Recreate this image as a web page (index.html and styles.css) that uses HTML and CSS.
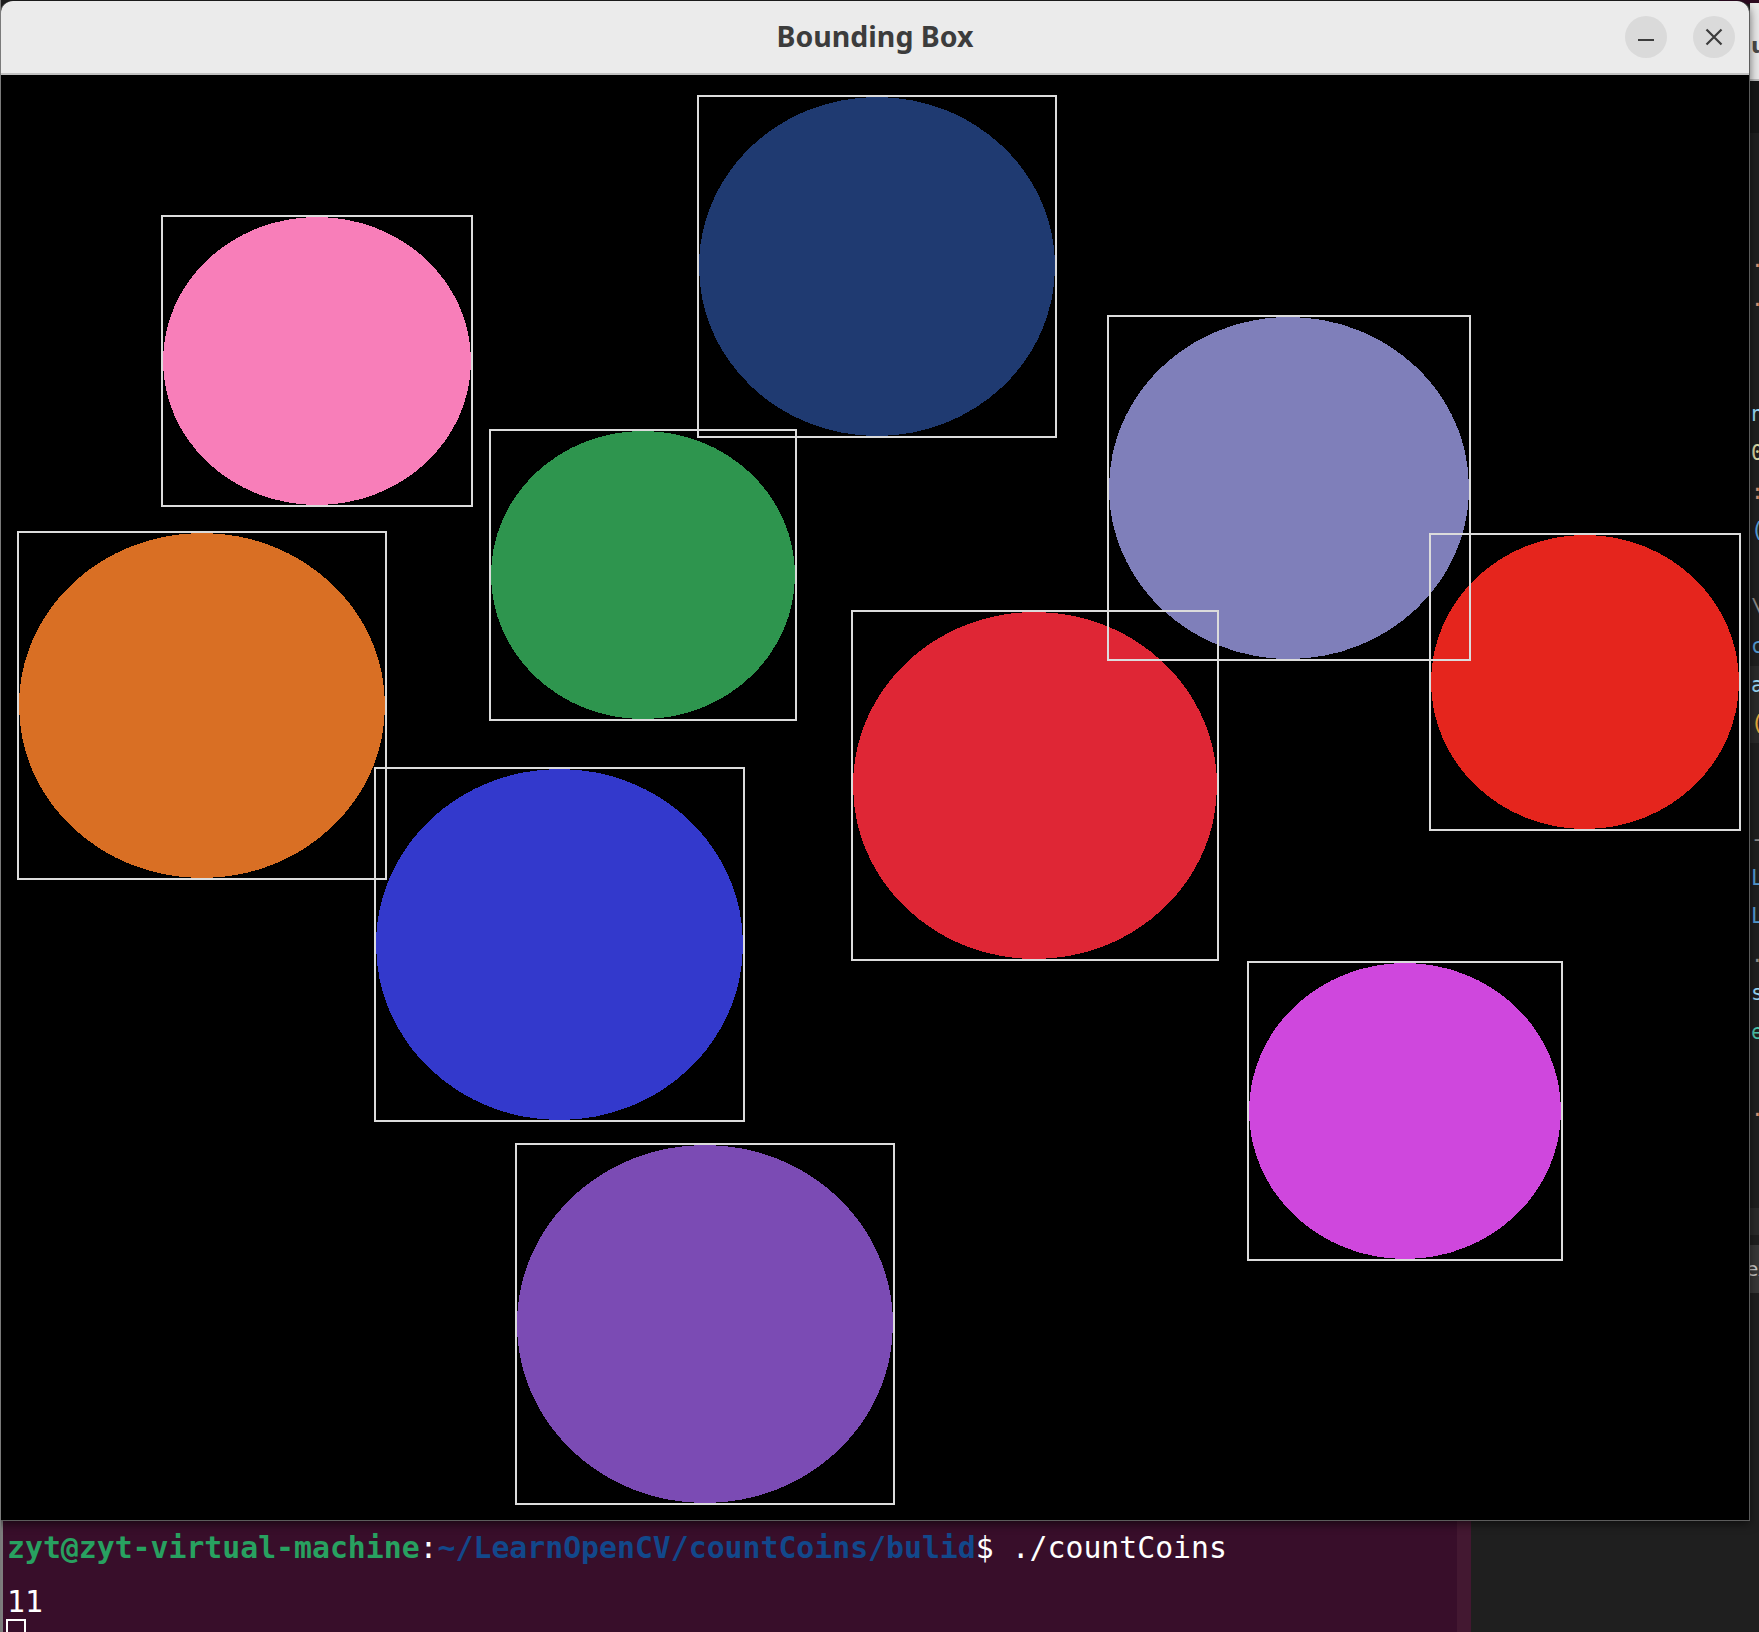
FILE: index.html
```html
<!DOCTYPE html>
<html>
<head>
<meta charset="utf-8">
<link rel="stylesheet" href="styles.css">
</head>
<body>
<div class="desktop">
  <div class="corner"></div>
  <div class="editor">
    <div class="ed-top"><span class="ed-title">u</span></div>
    <div class="ed-dark"></div>
    <div class="ed-code">
      <div class="ln c-or">.</div>
      <div class="ln c-or">.</div>
      <div class="ln"></div>
      <div class="ln"></div>
      <div class="ln c-lb">n</div>
      <div class="ln c-ye">0</div>
      <div class="ln c-or">:</div>
      <div class="ln c-bl">(</div>
      <div class="ln"></div>
      <div class="ln c-gr">\</div>
      <div class="ln c-bl">c</div>
      <div class="ln c-lb hl">a</div>
      <div class="ln c-go hl">(</div>
      <div class="ln"></div>
      <div class="ln"></div>
      <div class="ln c-gr">-</div>
      <div class="ln c-bl">L</div>
      <div class="ln c-bl">L</div>
      <div class="ln c-gr">.</div>
      <div class="ln c-lb">s</div>
      <div class="ln c-te">e</div>
      <div class="ln"></div>
      <div class="ln c-or">.</div>
    </div>
    <div class="ed-band1"></div>
    <div class="ed-band2"><span>ex</span></div>
  </div>

  <div class="term">
    <div class="tline"><span class="t-green">zyt@zyt-virtual-machine</span><span class="t-white">:</span><span class="t-blue">~/LearnOpenCV/countCoins/bulid</span><span class="t-white">$ ./countCoins</span></div>
    <div class="tline"><span class="t-white">11</span></div>
    <div class="tline cur-line"><span class="cursor"></span></div>
  </div>

  <div class="win">
    <div class="titlebar">
      <div class="tb-side"></div>
      <div class="title">Bounding Box</div>
      <div class="tb-btns">
        <div class="wbtn">
          <svg width="18" height="18" viewBox="0 0 18 18"><rect x="1" y="11" width="16" height="2" fill="#3c3c3c"/></svg>
        </div>
        <div class="wbtn">
          <svg width="18" height="18" viewBox="0 0 18 18"><path d="M1.5 1.5 L16.5 16.5 M16.5 1.5 L1.5 16.5" stroke="#3c3c3c" stroke-width="2.2" fill="none"/></svg>
        </div>
      </div>
    </div>
    <svg class="canvas" width="1747" height="1445" viewBox="1 75 1747 1445">
      <g class="coins">
        <ellipse cx="877" cy="266.5" rx="178" ry="169.5" fill="#1f3a71"/>
        <ellipse cx="317" cy="361" rx="154" ry="144" fill="#f87eb9"/>
        <ellipse cx="1289" cy="488" rx="180" ry="171" fill="#7f7fba"/>
        <ellipse cx="643" cy="575" rx="152" ry="144" fill="#2e954e"/>
        <ellipse cx="202" cy="705.5" rx="183" ry="172.5" fill="#d96f24"/>
        <ellipse cx="1585" cy="682" rx="154" ry="147" fill="#e5251d"/>
        <ellipse cx="1035" cy="785.5" rx="182" ry="173.5" fill="#df2635"/>
        <ellipse cx="559.5" cy="944.5" rx="183.5" ry="175.5" fill="#3339cc"/>
        <ellipse cx="1405" cy="1111" rx="156" ry="148" fill="#cf47dd"/>
        <ellipse cx="705" cy="1324" rx="188" ry="179" fill="#7b4bb4"/>
      </g>
      <g class="boxes">
        <rect x="698" y="96" width="358" height="341"/>
        <rect x="162" y="216" width="310" height="290"/>
        <rect x="1108" y="316" width="362" height="344"/>
        <rect x="490" y="430" width="306" height="290"/>
        <rect x="18" y="532" width="368" height="347"/>
        <rect x="1430" y="534" width="310" height="296"/>
        <rect x="852" y="611" width="366" height="349"/>
        <rect x="375" y="768" width="369" height="353"/>
        <rect x="1248" y="962" width="314" height="298"/>
        <rect x="516" y="1144" width="378" height="360"/>
      </g>
    </svg>
  </div>
</div>
</body>
</html>
```

FILE: styles.css
```css
html, body {
  margin: 0;
  padding: 0;
  background: #1f1f1f;
}

body {
  width: 1759px;
  height: 1632px;
  overflow: hidden;
}

.desktop {
  position: relative;
  width: 1759px;
  height: 1632px;
  overflow: hidden;
  background: #1f1f1f;
  border-left: 1px solid #7a7a7a;
  box-sizing: border-box;
}

.corner {
  position: absolute;
  right: 0;
  top: 0;
  width: 40px;
  height: 4px;
  background: #2c0a20;
}

/* ---------- editor window (right edge, mostly hidden) ---------- */
.editor {
  position: absolute;
  left: 1749px;
  top: 3px;
  width: 10px;
  height: 1629px;
  overflow: hidden;
  background: #1f1f1f;
  display: flex;
  flex-direction: column;
}

.ed-top {
  height: 78px;
  background: #e9e9e9;
  border-bottom: 2px solid #bdbdbd;
  box-sizing: border-box;
  padding-top: 30px;
  padding-left: 1px;
  font-family: "DejaVu Sans", sans-serif;
  font-weight: bold;
  font-size: 22px;
  line-height: 26px;
  color: #4a4a4a;
  flex: none;
}

.ed-dark {
  height: 52px;
  background: #161616;
  flex: none;
}

.ed-code {
  padding-top: 108px;
  font-family: "DejaVu Sans Mono", monospace;
  font-size: 21px;
  flex: none;
}

.ln {
  height: 38.6px;
  line-height: 38.6px;
  padding-left: 1px;
  white-space: pre;
}

.ln.hl { background: #2a2a2a; }
.c-or { color: #ce9178; }
.c-lb { color: #9cdcfe; }
.c-bl { color: #569cd6; }
.c-ye { color: #dcdcaa; }
.c-gr { color: #8c8c8c; }
.c-go { color: #e2a93c; }
.c-te { color: #4ec9b0; }

.ed-band1 {
  margin-top: 79px;
  height: 27px;
  background: #2b2b2b;
  flex: none;
}

.ed-band2 {
  margin-top: 10px;
  height: 48px;
  background: #383838;
  flex: none;
  font-family: "DejaVu Sans", sans-serif;
  font-size: 20px;
  line-height: 48px;
  color: #c8c8c8;
  margin-left: -4px;
}

/* ---------- terminal (behind the dialog) ---------- */
.term {
  position: absolute;
  left: 0;
  top: 1500px;
  width: 1470px;
  height: 132px;
  box-sizing: border-box;
  background: #380e2a;
  border-left: 2px solid #7d7d7d;
  border-right: 14px solid #431831;
  padding-top: 11px;
  padding-left: 4px;
  font-family: "DejaVu Sans Mono", monospace;
  font-size: 29.8px;
}

.tline {
  height: 54px;
  box-sizing: border-box;
  padding-top: 20px;
  line-height: 34px;
  white-space: pre;
}

.t-green { color: #28a160; font-weight: bold; }
.t-blue { color: #12488b; font-weight: bold; }
.t-white { color: #ffffff; }

.cur-line { padding-top: 0; }

.cursor {
  display: inline-block;
  width: 20px;
  height: 44px;
  box-sizing: border-box;
  border: 2px solid #ffffff;
  vertical-align: top;
  margin-left: -1px;
}

/* ---------- OpenCV "Bounding Box" window ---------- */
.win {
  position: absolute;
  left: -1px;
  top: 1px;
  width: 1750px;
  box-sizing: border-box;
  border-left: 1px solid #5c5c5c;
  border-right: 1px solid #5c5c5c;
  border-bottom: 1px solid #5c5c5c;
  border-radius: 12px 12px 0 0;
  box-shadow: 0 3px 10px rgba(0, 0, 0, 0.55);
  display: flex;
  flex-direction: column;
  background: #000;
}

.titlebar {
  height: 74px;
  box-sizing: border-box;
  background: #ebebeb;
  border-bottom: 2px solid #c2c2c2;
  border-radius: 12px 12px 0 0;
  display: grid;
  grid-template-columns: 1fr auto 1fr;
  align-items: center;
}

.title {
  font-family: "Noto Sans", "Open Sans", sans-serif;
  font-weight: bold;
  font-size: 28.5px;
  color: #3c3c3c;
  line-height: 34px;
  margin-top: -2px;
}

.tb-btns {
  justify-self: end;
  display: flex;
  gap: 26px;
  padding-right: 14px;
  margin-top: -1px;
}

.wbtn {
  width: 42px;
  height: 42px;
  border-radius: 50%;
  background: #dadada;
  display: flex;
  align-items: center;
  justify-content: center;
}

.canvas {
  display: block;
  background: #000;
}

.coins ellipse {
  shape-rendering: crispEdges;
}

.boxes rect {
  fill: none;
  stroke: #dcdcdc;
  stroke-width: 2;
  shape-rendering: crispEdges;
}
```
